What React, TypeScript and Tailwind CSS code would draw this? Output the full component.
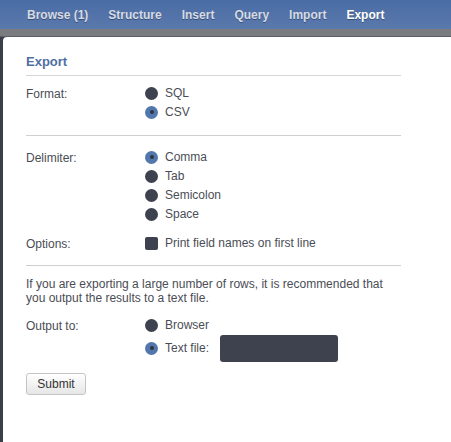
import React from "react";

const tabs = ["Browse (1)", "Structure", "Insert", "Query", "Import", "Export"];

function Radio({ checked }: { checked?: boolean }) {
  return checked ? (
    <span className="flex h-[13px] w-[13px] shrink-0 items-center justify-center rounded-full bg-[#5277ad]">
      <span className="h-[4px] w-[4px] rounded-full bg-[#2f3440]" />
    </span>
  ) : (
    <span className="h-[13px] w-[13px] shrink-0 rounded-full bg-[#3e424e]" />
  );
}

function Option({ label, checked }: { label: string; checked?: boolean }) {
  return (
    <div className="flex h-[19px] items-center gap-[7px]">
      <Radio checked={checked} />
      <span>{label}</span>
    </div>
  );
}

function Row({ label, children }: { label: string; children: React.ReactNode }) {
  return (
    <div className="flex">
      <div className="w-[119px] shrink-0 pt-[1px]">{label}</div>
      <div className="flex flex-col">{children}</div>
    </div>
  );
}

export default function App() {
  return (
    <div
      className="h-[442px] w-[451px] overflow-hidden bg-[#3b3f4b] text-[12px] text-[#4a4d55]"
      style={{ fontFamily: '"Liberation Sans", Arial, sans-serif' }}
    >
      <div className="flex h-[29px] items-center gap-[20px] bg-gradient-to-b from-[#4a6da6] to-[#5a78ab] pl-[27px] text-[12px] font-bold text-[#d6dbe3] [text-shadow:0_1px_0_#3a4f78]">
        {tabs.map((t) => (
          <span key={t} className={t === "Export" ? "text-white" : ""}>
            {t}
          </span>
        ))}
      </div>
      <div className="h-[8px] bg-[#7a7b7e] border-b border-[#5d5f66]" />
      <div className="ml-[3px] h-[405px] rounded-tl-[4px] bg-white pl-[23px] pt-[15px]">
        <div className="w-[375px]">
          <h2 className="border-b border-[#d6d6d6] pb-[3px] text-[13px] font-bold text-[#4f6fa3]">
            Export
          </h2>
          <div className="border-b border-[#cfcfcf] pb-[13px] pt-[8px]">
            <Row label="Format:">
              <Option label="SQL" />
              <Option label="CSV" checked />
            </Row>
          </div>
          <div className="border-b border-[#cfcfcf] pb-[12px] pt-[12px]">
            <Row label="Delimiter:">
              <Option label="Comma" checked />
              <Option label="Tab" />
              <Option label="Semicolon" />
              <Option label="Space" />
            </Row>
            <div className="mt-[10px]">
              <Row label="Options:">
                <div className="flex h-[19px] items-center gap-[7px]">
                  <span className="h-[13px] w-[13px] rounded-[2px] bg-[#3e424e]" />
                  <span>Print field names on first line</span>
                </div>
              </Row>
            </div>
          </div>
          <p className="pt-[11px] leading-[14px]">
            If you are exporting a large number of rows, it is recommended that you output the results to a text file.
          </p>
          <div className="mt-[11px]">
            <Row label="Output to:">
              <Option label="Browser" />
              <div className="flex items-center gap-[7px]">
                <Radio checked />
                <span>Text file:</span>
                <span className="ml-[4px] h-[27px] w-[118px] rounded-[3px] bg-[#3e424e]" />
              </div>
            </Row>
          </div>
          <button className="mt-[11px] h-[22px] w-[60px] rounded-[3px] border border-[#c4c4c4] bg-gradient-to-b from-white to-[#e6e6e6] text-[12px] text-[#333]">
            Submit
          </button>
        </div>
      </div>
    </div>
  );
}
